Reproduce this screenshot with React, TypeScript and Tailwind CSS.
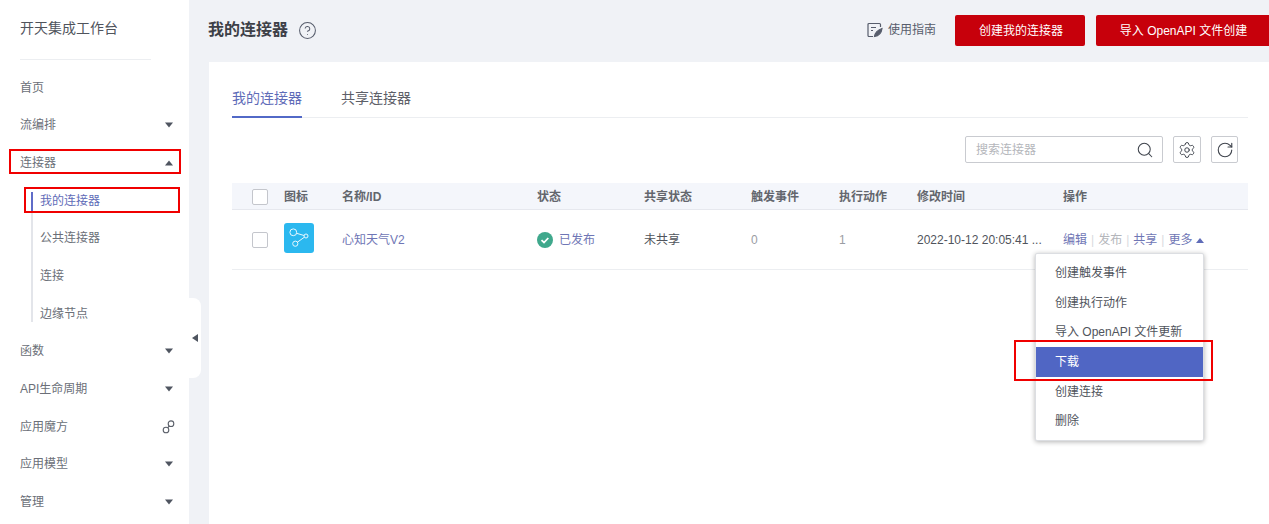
import { CircleHelp, Search, RotateCw, Settings } from "lucide-react";

const Caret = ({ up = false }: { up?: boolean }) => (
  <svg width="8" height="6" viewBox="0 0 8 6" className="shrink-0">
    <path d={up ? "M4 0.5L8 5.5H0z" : "M0 .5h8L4 5.5z"} fill="#4f5560" />
  </svg>
);

const NavRow = ({ label, caret, up, children }: { label: string; caret?: boolean; up?: boolean; children?: React.ReactNode }) => (
  <div className="flex h-[37.65px] items-center justify-between pl-5 pr-4 text-[12px] text-[#6b6f78]">
    <span>{label}</span>
    {caret && <Caret up={up} />}
    {children}
  </div>
);

const SubRow = ({ label, active }: { label: string; active?: boolean }) => (
  <div className={`flex h-[37.65px] items-center pl-[9px] text-[12px] ${active ? "text-[#5f6cb8]" : "text-[#6b6f78]"}`}>{label}</div>
);

const ConnectorIcon = () => (
  <div className="-mt-[5px] h-[30px] w-[30px] rounded-[3px] bg-[#2bb8ef]">
    <svg width="30" height="30" viewBox="0 0 30 30" fill="none" stroke="#e8f8ff" strokeWidth="1">
      <circle cx="9.300" cy="9.300" r="3.400" />
      <circle cx="22" cy="13" r="2" />
      <circle cx="11.300" cy="20.700" r="2.600" />
      <path d="M12.600 10.300l7.500 2.200M20.400 14.200L13.400 19.200" />
    </svg>
  </div>
);

const Checkbox = () => <div className="h-[16px] w-[16px] rounded-[2px] border border-[#c4c6cc] bg-white" />;

const GRID = "grid grid-cols-[20px_32px_58px_195px_107px_107px_88px_78px_146px_1fr] items-center";

const Menu = ["创建触发事件", "创建执行动作", "导入 OpenAPI 文件更新", "下载", "创建连接", "删除"];

export default function App() {
  return (
    <div
      className="relative flex h-[524px] w-[1269px] overflow-hidden bg-[#f0f2f6]"
      style={{ fontFamily: '"Liberation Sans", "Noto Sans CJK SC", sans-serif' }}
    >
      {/* sidebar */}
      <aside className="relative w-[189px] shrink-0 bg-white">
        <div className="ml-5 flex h-[60px] w-[131px] items-center border-b border-[#eceef1] pb-[3px] text-[14px] whitespace-nowrap text-[#50545c]">开天集成工作台</div>
        <div className="pt-[9px]">
          <NavRow label="首页" />
          <NavRow label="流编排" caret />
          <NavRow label="连接器" caret up />
          <div className="relative ml-[31px]">
            <div className="absolute top-[10px] bottom-[10px] left-0 w-[2px] bg-[#e3e5ea]" />
            <div className="absolute top-[10px] left-0 h-[19px] w-[2px] bg-[#5f6cc8]" />
            <SubRow label="我的连接器" active />
            <SubRow label="公共连接器" />
            <SubRow label="连接" />
            <SubRow label="边缘节点" />
          </div>
          <NavRow label="函数" caret />
          <NavRow label="API生命周期" caret />
          <NavRow label="应用魔方">
            <svg width="14" height="14" viewBox="0 0 14 14" fill="none" stroke="#5a5f69" strokeWidth="1.1" className="-mr-[2px]">
              <circle cx="5" cy="10" r="2.800" />
              <circle cx="10" cy="3.700" r="2.800" />
              <path d="M6.700 7.800l1.600-1.900" />
            </svg>
          </NavRow>
          <NavRow label="应用模型" caret />
          <NavRow label="管理" caret />
        </div>
      </aside>

      {/* main */}
      <main className="flex min-w-0 flex-1 flex-col">
        <header className="flex h-[62px] shrink-0 items-center pb-[1px] pl-[19px]">
          <h1 className="-mt-[1px] text-[16px] font-bold text-[#3d4047]">我的连接器</h1>
          <CircleHelp className="ml-[10px] text-[#575d6c]" size={19} strokeWidth={1.3} />
          <div className="ml-auto flex items-center">
            <svg width="16" height="16" viewBox="0 0 16 16" fill="none" stroke="#575d6c" strokeWidth="1.2" className="-mt-[2px]">
              <path d="M6 14.500H2a1 1 0 0 1-1-1V2.500a1 1 0 0 1 1-1h10.500a1 1 0 0 1 1 1V5" />
              <path d="M4 5.500h5M4 8.500h2" />
              <path d="M7.500 14.500c.5-3 3-6.500 7.500-8-.5 4-3 7.500-7.500 8z" fill="#575d6c" />
            </svg>
            <span className="-mt-[2px] ml-[5px] text-[12px] text-[#575d6c]">使用指南</span>
            <button className="ml-[19px] h-[31px] w-[130px] rounded-[2px] bg-[#c7000b] pl-[2px] text-[12px] text-white">创建我的连接器</button>
            <button className="ml-[11px] h-[31px] w-[173px] shrink-0 rounded-l-[2px] bg-[#c7000b] pl-[2px] text-[12px] text-white">导入 OpenAPI 文件创建</button>
          </div>
        </header>

        <section className="mr-0 ml-[20px] flex-1 bg-white pt-[26px] pr-[21px] pl-[23px]">
          {/* tabs */}
          <div className="flex h-[30px] gap-[39px] border-b border-[#eceef1] text-[14px]">
            <div className="h-[30px] border-b-[2px] border-[#5269c7] leading-[20px] text-[#5f6cb8]">我的连接器</div>
            <div className="leading-[20px] text-[#5d6068]">共享连接器</div>
          </div>

          {/* toolbar */}
          <div className="mt-[18px] flex h-[27px] items-center justify-end pr-[10px]">
            <div className="flex h-[27px] w-[198px] items-center justify-between rounded-[2px] border border-[#c9cbd0] pr-[8px] pl-[10px] text-[12px] text-[#b4b6bb]">
              <span>搜索连接器</span>
              <Search size={18} strokeWidth={1.4} className="text-[#3f444d]" />
            </div>
            <div className="ml-[10px] flex h-[27px] w-[28px] items-center justify-center rounded-[2px] border border-[#c9cbd0]">
              <Settings size={18} strokeWidth={1.3} className="text-[#3f444d]" />
            </div>
            <div className="ml-[10px] flex h-[27px] w-[27px] items-center justify-center rounded-[2px] border border-[#c9cbd0]">
              <RotateCw size={18} strokeWidth={1.5} className="text-[#3f444d]" />
            </div>
          </div>

          {/* table */}
          <div className={`${GRID} mt-[20px] h-[27px] border-b border-[#e6e8ee] bg-[#f4f6fb] pt-[1px] text-[12px] font-bold text-[#63666d]`}>
            <div className="col-start-2"><Checkbox /></div>
            <div>图标</div>
            <div>名称/ID</div>
            <div>状态</div>
            <div>共享状态</div>
            <div>触发事件</div>
            <div>执行动作</div>
            <div>修改时间</div>
            <div>操作</div>
          </div>
          <div className={`${GRID} h-[60px] border-b border-[#eceef1] pt-[1px] text-[12px] text-[#6b6f78]`}>
            <div className="col-start-2"><Checkbox /></div>
            <div><ConnectorIcon /></div>
            <div className="text-[#6f76b5]">心知天气V2</div>
            <div className="flex items-center gap-[6px] text-[#6f76b5]">
              <svg width="16" height="16" viewBox="0 0 16 16">
                <circle cx="8" cy="8" r="8" fill="#3fa88c" />
                <path d="M4.500 8.200l2.500 2.300 4.300-4.500" fill="none" stroke="#fff" strokeWidth="1.800" />
              </svg>
              已发布
            </div>
            <div className="text-[#50545c]">未共享</div>
            <div className="text-[#9a9da3]">0</div>
            <div className="text-[#9a9da3]">1</div>
            <div className="whitespace-nowrap text-[#50545c]">2022-10-12 20:05:41 ...</div>
            <div className="flex items-center whitespace-nowrap text-[#6f76b5]">
              <span>编辑</span>
              <span className="mx-[4px] text-[#d8dade]">|</span>
              <span className="text-[#b4b6bb]">发布</span>
              <span className="mx-[4px] text-[#d8dade]">|</span>
              <span>共享</span>
              <span className="mx-[4px] text-[#d8dade]">|</span>
              <span>更多</span>
              <svg width="8" height="5" viewBox="0 0 8 5" className="ml-[4px]"><path d="M4 0l4 5H0z" fill="#5f6cb8" /></svg>
            </div>
          </div>
        </section>
      </main>

      {/* sidebar collapse tab */}
      <div className="absolute top-[298px] left-[189px] flex h-[80px] w-[12px] items-center justify-center rounded-r-[8px] bg-white">
        <svg width="6" height="8" viewBox="0 0 6 8" className="-mt-[1px]"><path d="M6 0v8L0 4z" fill="#4f5560" /></svg>
      </div>

      {/* more dropdown */}
      <div className="absolute top-[253px] left-[1035px] w-[169px] rounded-[2px] border border-[#dcdee2] bg-white py-[4px] shadow-[0_1px_5px_rgba(0,0,0,0.3)]">
        {Menu.map((item) => (
          <div
            key={item}
            className={`flex h-[29.7px] items-center pl-[19px] text-[12px] ${item === "下载" ? "bg-[#5066c4] text-white" : "text-[#50545c]"}`}
          >
            {item}
          </div>
        ))}
      </div>

      {/* red annotation boxes */}
      <div className="absolute top-[149px] left-[9px] h-[25px] w-[172px] border-2 border-[#f00000]" />
      <div className="absolute top-[187px] left-[24px] h-[26px] w-[156px] border-2 border-[#f00000]" />
      <div className="absolute top-[340px] left-[1014px] h-[41px] w-[199px] border-2 border-[#f00000]" />
    </div>
  );
}
